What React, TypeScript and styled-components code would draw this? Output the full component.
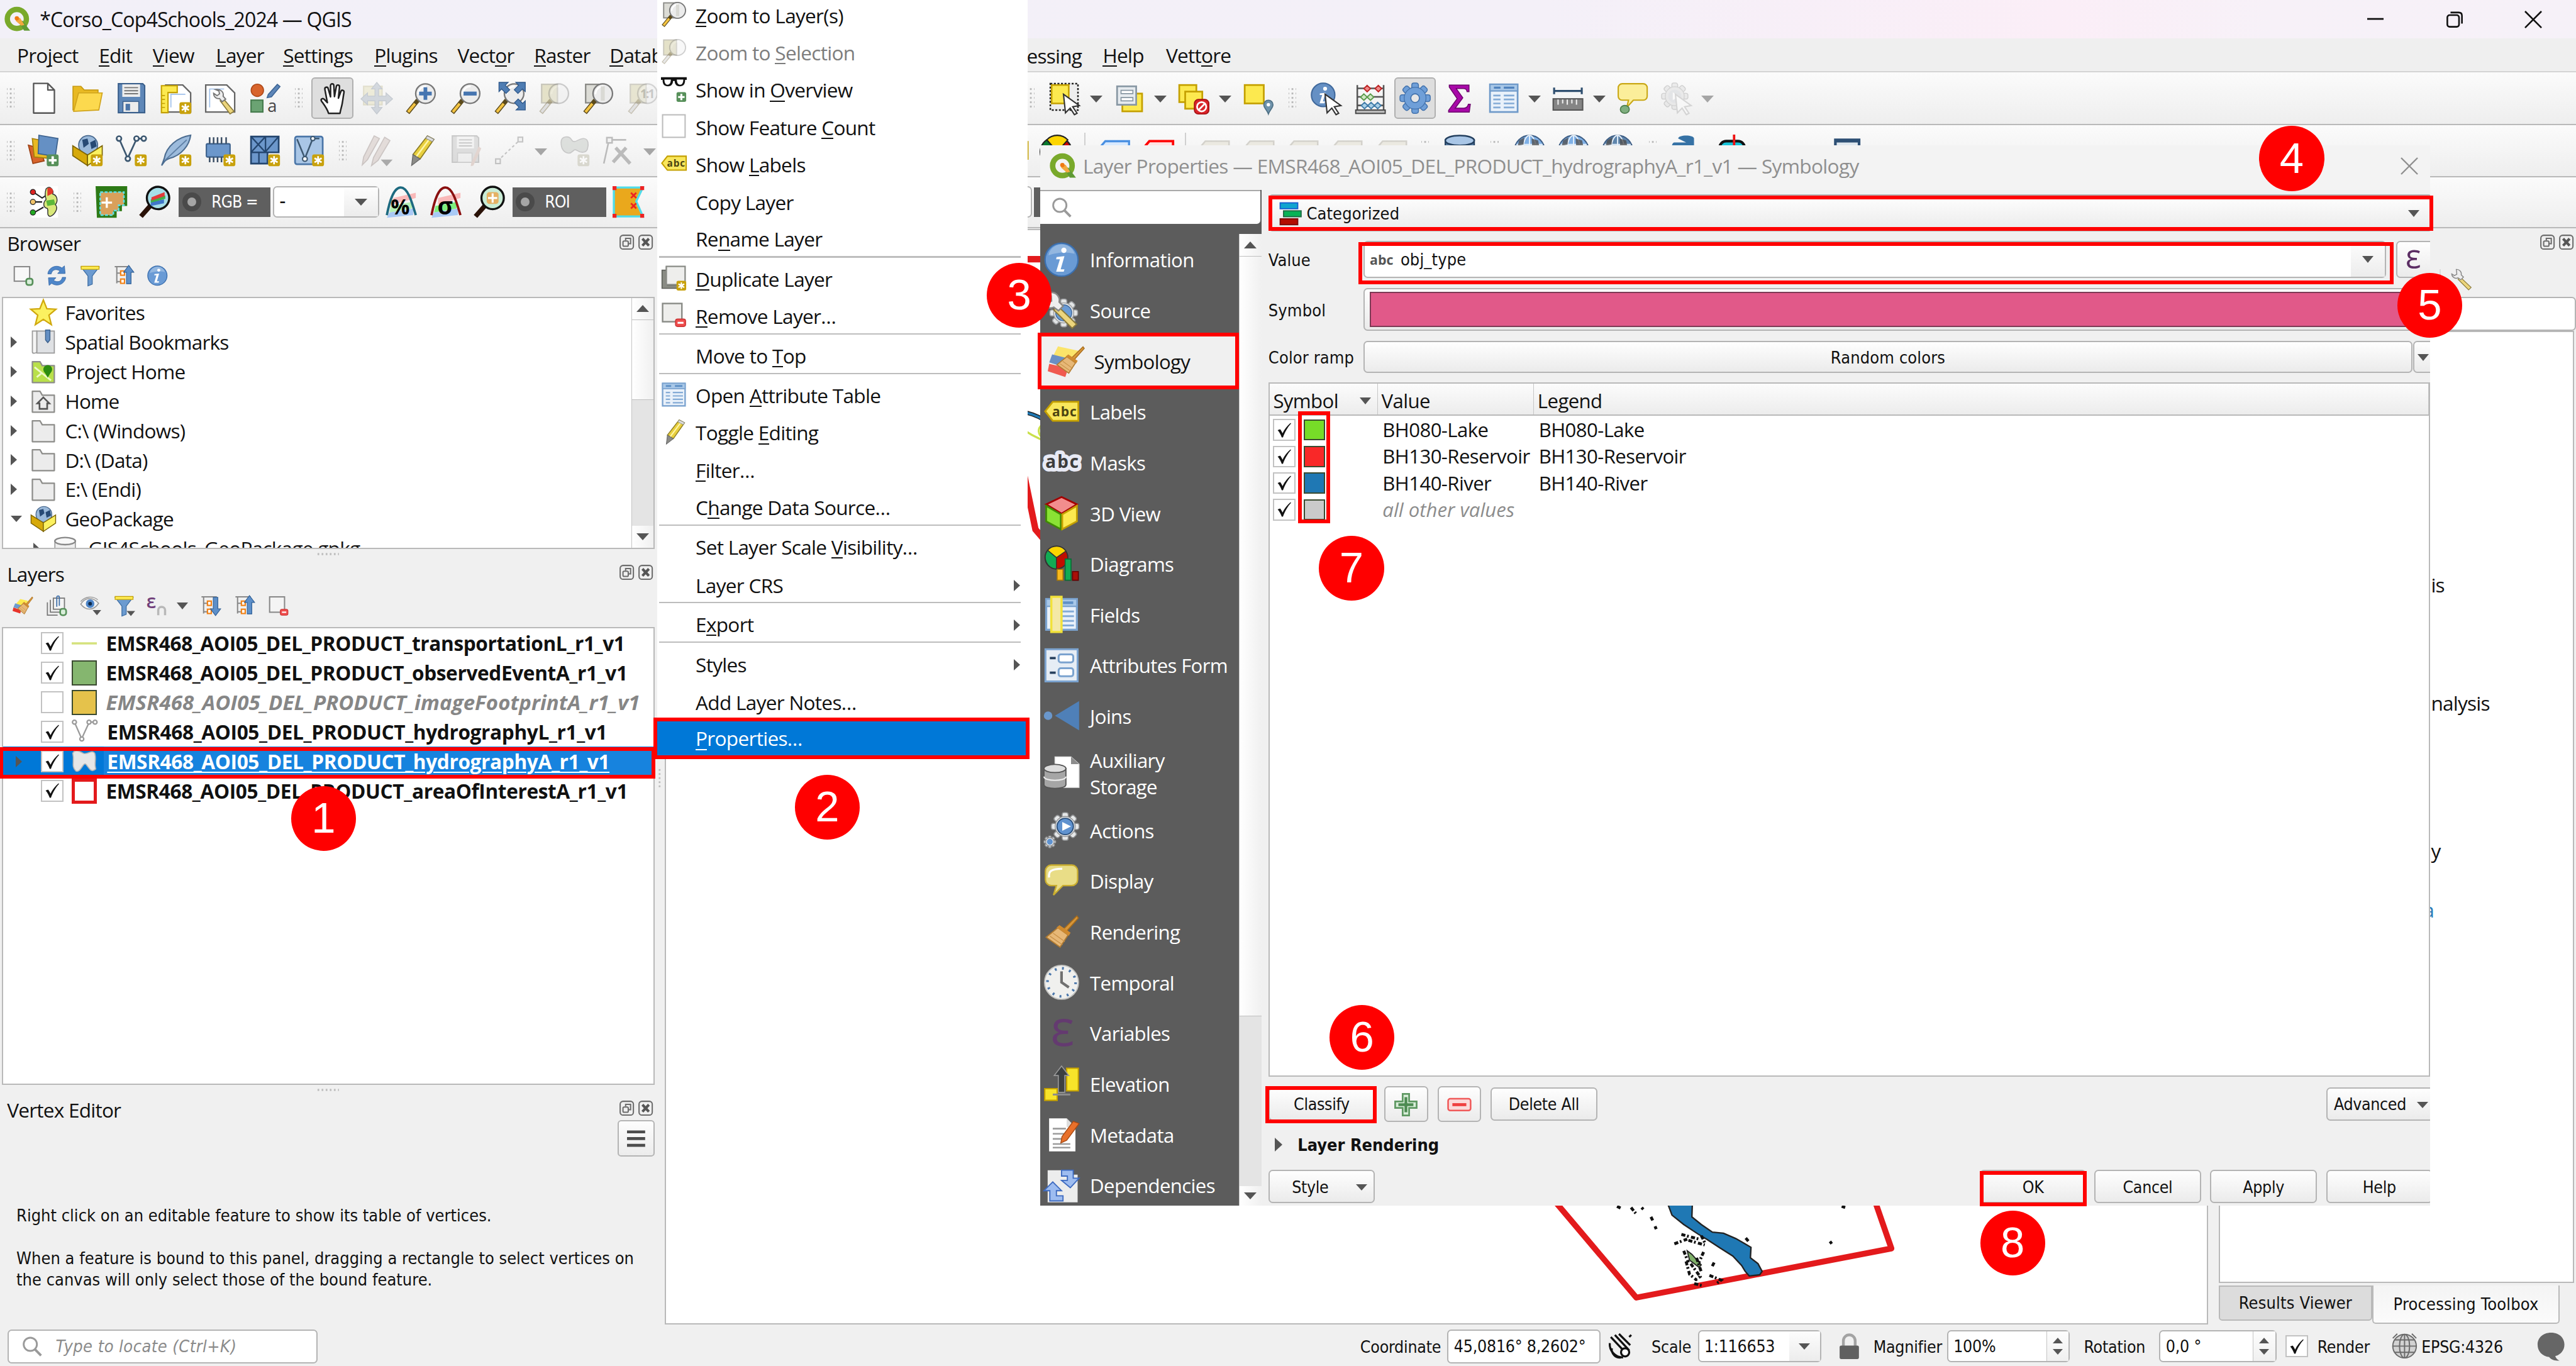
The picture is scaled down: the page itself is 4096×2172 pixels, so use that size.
import React from "react";
import styled, { createGlobalStyle, css } from "styled-components";

const UI = `"Open Sans", "Noto Sans", sans-serif`;
const TAHOMA = `"DejaVu Sans Condensed", "DejaVu Sans", sans-serif`;

const Global = createGlobalStyle`
  html, body { margin: 0; padding: 0; height: 100%; overflow: hidden; background: #f0f0f0; }
  * { box-sizing: border-box; }
  svg { display: block; flex: none; overflow: visible; }
  svg text { font-family: ${UI}; }
`;

/* ------------------------------------------------------------------ icons */

const Star = ({ gray }: { gray?: boolean }) => (
  <g>
    <rect x="14.5" y="15" width="9" height="9" rx="1.6" fill={gray ? "#c9c7b8" : "#c8a10c"} />
    <path d="M19 16.4v6.2M16.3 17.9l5.4 3.2M16.3 21.1l5.4-3.2" stroke="#fff" strokeWidth="1.3" />
  </g>
);
const PlusBadge = () => (
  <g>
    <rect x="14.5" y="15" width="9" height="9" rx="1.6" fill="#57905a" />
    <path d="M19 16.5v6M16 19.5h6" stroke="#fff" strokeWidth="1.8" />
  </g>
);
const Lens = ({ children, dim }: { children?: React.ReactNode; dim?: boolean }) => (
  <g opacity={dim ? 0.35 : 1}>
    <path d="M9.8 13.5L2 23" stroke="#5b4a1c" strokeWidth="3.4" />
    <path d="M7.6 16.2L2.4 22.5" stroke={dim ? "#bbb" : "#f4c442"} strokeWidth="2" />
    <circle cx="15.5" cy="8.5" r="7.4" fill="#ececec" stroke="#777" strokeWidth="1.1" />
    <path d="M10 9a6 6 0 0 1 6-6" stroke="#fff" strokeWidth="1.2" fill="none" />
    {children}
  </g>
);
const Pencil = ({ c = "#e8cf3e", d = "#8a7a22" }: { c?: string; d?: string }) => (
  <g>
    <path d="M17 1l5 2.6L11.5 18.5 6 15.2z" fill={c} stroke={d} strokeWidth=".8" />
    <path d="M19.3 2.4L8.5 16.8" stroke="#fff6a8" strokeWidth="1.2" />
    <path d="M6 15.2l5.5 3.3L5 23.5z" fill="#8b8b87" stroke="#666" strokeWidth=".6" />
    <path d="M17 1l5 2.6-1.3 1.8-5-2.6z" fill="#ddd" stroke="#888" strokeWidth=".5" />
  </g>
);
const Brush = () => (
  <g>
    <path d="M22.5 1.5l1 1.4-8.6 9.6-2-1.6z" fill="#d7963a" stroke="#a86c1a" strokeWidth=".7" />
    <path d="M9.5 9.5l7 5-5.5 8.3L1.5 16z" fill="#e7b877" stroke="#b07a30" strokeWidth=".8" />
    <path d="M4 15.2l8.6 6M6.2 13.2l8 5.8" stroke="#c9924b" strokeWidth=".6" />
    <path d="M8.6 9.3l8.4 5.6 1.2-2-7.6-5.2z" fill="#cf8a2f" />
  </g>
);
const Abc = ({ fill, stroke }: { fill: string; stroke: string }) => (
  <g>
    <path d="M6 5.5h17.5v13H6L.8 12z" fill={fill} stroke={stroke} strokeWidth="1.2" />
    <text x="5.6" y="15.4" fontSize="9" fontWeight="700" fill="#4b4410" textLength="16">abc</text>
  </g>
);
const Gear = ({ cx, cy, r, fill, stroke }: { cx: number; cy: number; r: number; fill: string; stroke: string }) => (
  <g transform={`translate(${cx} ${cy})`}>
    {[0, 45, 90, 135].map((a) => (
      <rect key={a} x={-r * 0.22} y={-r} width={r * 0.44} height={r * 2} rx={r * 0.14} transform={`rotate(${a})`} fill={fill} stroke={stroke} strokeWidth=".7" />
    ))}
    <circle r={r * 0.72} fill={fill} stroke={stroke} strokeWidth=".6" />
  </g>
);
const Tree = ({ up }: { up?: boolean }) => (
  <g>
    <path d="M1 1.5h18M3.5 2v19M4 9h4M4 19h4" stroke="#888" strokeWidth="1.5" fill="none" />
    <rect x="8" y="6.5" width="4.5" height="5" fill="#fff" stroke="#f08218" strokeWidth="1.6" />
    <rect x="8" y="16" width="4.5" height="5" fill="#fff" stroke="#f08218" strokeWidth="1.6" />
    <path
      d={up ? "M17.5 0l6 8h-3.3v13.5h-5.4V8h-3.3z" : "M17.5 23.5l6-8h-3.3V2h-5.4v13.5h-3.3z"}
      fill="#5d8fc9" stroke="#2c5c94" strokeWidth=".8"
    />
  </g>
);
const Globe = ({ dark }: { dark?: boolean }) => (
  <g>
    <circle cx="12" cy="12" r="11.4" fill={dark ? "#5f86ad" : "#7fb0e6"} stroke="#3f5f86" strokeWidth="1" />
    <ellipse cx="12" cy="12" rx="5" ry="11.4" fill="none" stroke="#e9f2fb" strokeWidth=".9" />
    <path d="M2 7.5h20M.8 12h22.4M2.5 17h19M12 .6v22.8" stroke="#e9f2fb" strokeWidth=".9" />
    <path d="M4 4.5l4-2.5-.6 5.5-4.4 1zM13.5 3l5 1.4 1 5.4-5.5-.6z" fill="#4c4a48" opacity=".75" />
  </g>
);
const Package = () => (
  <g>
    <circle cx="12.5" cy="8" r="7.2" fill="#9ab9da" stroke="#4a6a8f" strokeWidth=".8" />
    <path d="M8 4l4-1 1 4-4 3zM14 6l4-2 1 5-4 2z" fill="#274a75" />
    <path d="M.8 8.5l11.2 7v8L.8 16z" fill="#d6a90a" stroke="#7d6405" strokeWidth=".8" />
    <path d="M23.2 8.5L12 15.5v8L23.2 16z" fill="#fbf160" stroke="#7d6405" strokeWidth=".8" />
  </g>
);
const VLine = ({ c = "#3d5871" }: { c?: string }) => (
  <g fill="#fff" stroke={c} strokeWidth="1.3">
    <path d="M2.5 3l6.600 15L16 3h5" fill="none" />
    <circle cx="2.5" cy="3" r="1.8" /><circle cx="9.2" cy="18.3" r="1.8" /><circle cx="15.8" cy="3" r="1.8" /><circle cx="21.3" cy="3" r="1.8" />
  </g>
);
const Folder = ({ children, fill = "#ececec" }: { children?: React.ReactNode; fill?: string }) => (
  <g>
    <path d="M2 3h7l2 3.5h11V22H2z" fill={fill} stroke="#8d8d8a" strokeWidth="1.3" strokeLinejoin="round" />
    {children}
  </g>
);
const Cursor = ({ dim }: { dim?: boolean }) => (
  <path d="M11 9l12 8.600-5 .9 3.300 5-2 1-3.200-5-3.600 3.600z" fill="#fff" stroke={dim ? "#aaa" : "#333"} strokeWidth="1" />
);
const Funnel = () => (
  <g>
    <path d="M1.5 2h21l-8 10.500V22l-5 2V12.500z" fill="#6c9bd0" stroke="#3f6fa5" strokeWidth="1" />
    <path d="M1.5 1h21v3.600h-21z" fill="#fce94f" stroke="#c4a000" strokeWidth=".9" />
  </g>
);
const Sheet = ({ dim }: { dim?: boolean }) => (
  <rect x="2.5" y="1.5" width="12" height="14" fill={dim ? "#e4e1c8" : "#dcdcd6"} stroke={dim ? "#c8c6bb" : "#8a8a86"} strokeWidth="1.1" />
);
const Info = () => (
  <g>
    <circle cx="12" cy="12" r="11.300" fill="#6a9bd5" stroke="#3b6fae" strokeWidth="1" />
    <path d="M3 9a9.300 9.300 0 0 1 18-1c-6-1.600-12-1-18 1z" fill="#fff" opacity=".28" />
    <circle cx="13.600" cy="5.600" r="1.800" fill="#fff" />
    <path d="M8.600 10.200l5.400-.6-2.600 9h2.600l-.5 1.600H8.300l2.600-8.500H8.300z" fill="#fff" />
  </g>
);
const SheetTable = () => (
  <g>
    <rect x="1.5" y="1.5" width="21" height="21" fill="#e9f1fa" stroke="#7ba3cf" strokeWidth="1.4" />
    <rect x="1.5" y="1.5" width="21" height="5" fill="#a9c8e8" stroke="#7ba3cf" strokeWidth="1" />
    <path d="M4.5 4h5M13 4h7" stroke="#5f90c6" strokeWidth="1.8" />
    <path d="M4.5 10h4M11 10h9.500M4.500 13.200h4M11 13.200h9.500M4.500 16.400h4M11 16.400h9.500M4.500 19.600h4M11 19.600h9.500" stroke="#84abd6" strokeWidth="1.3" />
  </g>
);
const Wrench = () => (
  <g>
    <path d="M10.5 9.5l12 11.500-2.800 2.600L8 12z" fill="#ecd57c" stroke="#8a7a3c" strokeWidth=".8" />
    <path d="M6 1a5 5 0 0 1 5.500 6l2.500 2.500-3 3L8 10.300A5 5 0 0 1 1 6l3 1.800 2.600-1.500L6.400 3.400z" fill="#eee" stroke="#888" strokeWidth="1" />
  </g>
);
const Cube = () => (
  <g>
    <path d="M12 1l10.500 5L12 12.300 1.500 6z" fill="#f28d8d" stroke="#a40000" strokeWidth="1.2" />
    <path d="M1.5 7v10.600L11.500 23V12.800z" fill="#8ae234" stroke="#3f8a05" strokeWidth="1.2" />
    <path d="M22.5 7v10.600L12.500 23V12.800z" fill="#fce94f" stroke="#c4a000" strokeWidth="1.2" />
  </g>
);

const icons: Record<string, React.ReactNode> = {
  qgis: (
    <g>
      <circle cx="11.6" cy="11.8" r="8.9" fill="none" stroke="#79a92b" strokeWidth="5" />
      <path d="M12.5 13.500h4.500l7 9.200h-5.600z" fill="#5f9a34" />
      <path d="M10.3 9.800l4.400 1.200 4 6.400-3 .6-5-4.200z" fill="#f3a93e" />
      <circle cx="11.6" cy="11.2" r="2" fill="#ee7913" />
    </g>
  ),
  newdoc: <path d="M4.5 .8h10.800l5 5v17.500H4.500zM15.300 .8v5h5" fill="#fff" stroke="#555" strokeWidth="1.1" strokeLinejoin="round" />,
  open: (
    <g>
      <path d="M1 21V3h6l2.500 2.800H20V21z" fill="#e8b923" stroke="#c79a12" strokeWidth=".8" />
      <path d="M1.5 22L5.200 8h18l-2.600 13z" fill="#fcd94e" stroke="#d0a41c" strokeWidth=".8" />
    </g>
  ),
  save: (
    <g>
      <path d="M2 1h18.500l1.500 1.500V23H2z" fill="#5e87b8" stroke="#3b608c" strokeWidth="1" />
      <rect x="5" y="1.5" width="13.5" height="9.5" fill="#eee" />
      <path d="M6.5 4h10.500M6.500 6.300h10.500M6.500 8.600h10.500" stroke="#777" strokeWidth=".9" />
      <rect x="5.5" y="14.5" width="12" height="8.3" fill="#ececec" stroke="#3b608c" strokeWidth=".7" />
      <rect x="7.5" y="16.3" width="3.4" height="5" fill="#4c75a8" />
    </g>
  ),
  savedim: (
    <g opacity=".4">
      <path d="M2 1h18.500l1.500 1.500V21H2z" fill="#bbb" stroke="#888" strokeWidth="1" />
      <rect x="5.5" y="1.5" width="13" height="9" fill="#eee" />
      <path d="M7 4h10M7 6.300h10M7 8.600h10" stroke="#888" strokeWidth=".9" />
      <rect x="6" y="14" width="11" height="7" fill="#e8e8e8" stroke="#999" strokeWidth=".7" />
      <path d="M22 9l2 1.500-6 13-2 .5.4-2.500z" fill="#c9a79b" />
    </g>
  ),
  layout: (
    <g>
      <path d="M4 2h13l6 6v14.500H4z" fill="#fff" stroke="#666" strokeWidth="1.1" />
      <path d="M8 19V9h11" fill="none" stroke="#9fc0ea" strokeWidth=".8" />
      <path d="M.8 2.500h12v5.200h-7V23h-5z" fill="#fce94f" stroke="#c4a000" strokeWidth="1" />
      <path d="M1 10h2.500M1 13h2.500M1 16h2.500M1 19h2.500" stroke="#c4a000" strokeWidth=".8" />
      <Star />
    </g>
  ),
  layoutmgr: (
    <g>
      <path d="M1 2h16l6 6v14.500H1z" fill="#fff" stroke="#666" strokeWidth="1.1" />
      <path d="M4 19V5h11" fill="none" stroke="#9fc0ea" strokeWidth=".8" />
      <path d="M14.5 12.500l8 9.500-3 2L12 14z" fill="#ecd57c" stroke="#8a7a3c" strokeWidth=".8" />
      <path d="M8.5 5.500c4-.6 6.500 2 5.700 5l2 2.200-2.700 2-2-2.400c-2.500.4-4.500-1.300-4.500-4l2.600 1.800 1.900-1.400-.5-2.200z" fill="#eee" stroke="#777" strokeWidth=".9" />
    </g>
  ),
  style: (
    <g>
      <circle cx="6.3" cy="6" r="4.7" fill="#d8642c" stroke="#b04a1a" strokeWidth=".8" />
      <path d="M21.5 1.500l2 1.700L17 11l-3.200.6.800-2.400z" fill="#5d86b8" stroke="#3d6595" strokeWidth=".8" />
      <rect x="1.5" y="13.5" width="9" height="9" fill="#6ba373" stroke="#447a4c" strokeWidth="1" />
      <text x="14" y="22.5" fontSize="13" fill="#444">a</text>
    </g>
  ),
  hand: (
    <path
      d="M8.8 23.500c-1-3.500-3-6-5.300-9.200-1-1.500.8-2.700 2-1.500l2.400 2.600L6 5.300c-.3-1.800 2-2.300 2.500-.6L10.300 11V2.500c0-1.900 2.400-1.900 2.500 0l.5 8.300 1.400-7.700c.4-1.700 2.600-1.300 2.400.5L16.300 12l1.900-5.200c.6-1.600 2.600-.8 2.300.8-.6 3.400-.9 6.500-1.500 9.400-.4 2-1.200 4-1.500 6.500z"
      fill="#fff" stroke="#222" strokeWidth="1.2" strokeLinejoin="round"
    />
  ),
  pansel: (
    <g opacity=".45">
      <rect x="2" y="3" width="14" height="14" fill="#e4dfb8" stroke="#c8c29a" />
      <path d="M12 0l4 5h-2.600v5.400H19V8l5 4.500-5 4.500v-3h-5.600v5H16l-4 5-4-5h2.600v-5H5v3L0 12.500 5 8v2.400h5.600V5H8z" fill="#a9b4c2" stroke="#8c98a6" strokeWidth=".6" />
    </g>
  ),
  zoomin: <Lens><path d="M15.5 3.700v9.600M10.700 8.500h9.600" stroke="#4675b0" strokeWidth="2.8" /></Lens>,
  zoomout: <Lens><path d="M10.5 8.500h10" stroke="#4675b0" strokeWidth="3" /></Lens>,
  zoomfull: (
    <Lens>
      <path d="M4 0h7L8.800 2.200l3.400 3.400-2.800 2.800L6 5 4 7zM24 0v7l-2.200-2-3.400 3.400-2.800-2.800L19 2.200 16.800 0zM24 21h-7l2.200-2.200-3.400-3.400 2.800-2.800L22 16l2-2z" fill="#4f7db3" stroke="#2e5789" strokeWidth=".6" />
    </Lens>
  ),
  zoomsel: <g><Sheet dim /><Lens dim /></g>,
  zoomlayer: <g><Sheet /><Lens><path d="M14 3h3v11h-3z" fill="#d9d9d4" /></Lens></g>,
  zoomnative: <g opacity=".8"><Sheet dim /><Lens dim><text x="10" y="12" fontSize="9" fontWeight="700" fill="#555">1:1</text></Lens></g>,
  selrect: (
    <g>
      <rect x="1" y="1" width="21" height="20" fill="#eee" stroke="#222" strokeWidth="1.2" strokeDasharray="1.5 1.2" />
      <rect x="2" y="2" width="13" height="14" fill="#fce94f" stroke="#c4a000" strokeWidth="1.2" />
      <Cursor />
    </g>
  ),
  selform: (
    <g>
      <rect x="6.5" y="8.5" width="15" height="13.5" fill="#fce94f" stroke="#c4a000" strokeWidth="1.3" />
      <rect x="2.5" y="3" width="14.5" height="14" fill="#e6ebef" stroke="#8897a3" strokeWidth="1.3" />
      <path d="M5.5 6h9v2.500h-9zM5.500 11.500h9V14h-9z" fill="#fff" stroke="#8897a3" strokeWidth=".8" />
    </g>
  ),
  desel: (
    <g>
      <rect x="1" y="2" width="13" height="13" fill="#fce94f" stroke="#c4a000" strokeWidth="1.3" />
      <rect x="5.5" y="7" width="13" height="13" fill="#fce94f" stroke="#c4a000" strokeWidth="1.3" />
      <rect x="12.5" y="13" width="11" height="11" rx="3" fill="#d9252a" stroke="#a50f12" strokeWidth=".8" />
      <circle cx="18" cy="18.5" r="3.5" fill="none" stroke="#fff" strokeWidth="1.3" />
      <path d="M15.6 21l5-5" stroke="#fff" strokeWidth="1.3" />
    </g>
  ),
  selloc: (
    <g>
      <rect x="1.5" y="2" width="14.5" height="14" fill="#fce94f" stroke="#c4a000" strokeWidth="1.3" />
      <path d="M19.5 24c-1-3-3.500-4.500-3.500-7a3.500 3.500 0 0 1 7 0c0 2.500-2.500 4-3.500 7z" fill="#6f93ab" stroke="#4e7085" strokeWidth=".8" />
      <circle cx="19.5" cy="17" r="1.3" fill="#fff" />
    </g>
  ),
  identify: (
    <g>
      <circle cx="9.5" cy="9.5" r="8.9" fill="#6590c4" stroke="#40699c" strokeWidth="1" />
      <circle cx="11" cy="4.8" r="1.5" fill="#fff" />
      <path d="M7 8.400l4.300-.5-2 6.500h1.600l-.4 1.500H6.800l2-6.300H6.900z" fill="#fff" />
      <Cursor />
    </g>
  ),
  abacus: (
    <g>
      <path d="M2 2v19M22 2v19M2 4.500h20M2 11h20M2 17.500h20" stroke="#555" strokeWidth="1.2" fill="none" />
      <g strokeWidth=".9">
        <path d="M9.5 2.300l2.500 2.400-2.500 2.400L7 4.700zM18 2.300l2.500 2.400L18 7.100l-2.500-2.400z" fill="#e88" stroke="#b22" />
        <path d="M7 8.800l2.500 2.400L7 13.600l-2.500-2.400zM12 8.800l2.500 2.400-2.500 2.400-2.500-2.400z" fill="#cfe8c4" stroke="#5a9a4a" />
        <path d="M7.5 15.200l2.500 2.400L7.500 20 5 17.600zM12.500 15.200l2.500 2.400-2.500 2.400-2.500-2.400zM17.500 15.200l2.500 2.400-2.500 2.400-2.500-2.400z" fill="#a9d0e8" stroke="#3f7ba8" />
      </g>
      <rect x=".8" y="21" width="22.4" height="2.6" fill="#bbb" stroke="#444" strokeWidth=".9" />
    </g>
  ),
  gear: <g><Gear cx={12} cy={12} r={11.5} fill="#6f9fd8" stroke="#4272ad" /><circle cx="12" cy="12" r="3.3" fill="#e6e6e6" stroke="#4272ad" strokeWidth=".8" /></g>,
  sigma: <path d="M4.5 2h15v5h-1.500c-.3-1.700-1-2.300-3-2.300H9.800l5 7L9 19.600h6.500c2 0 3-1 3.500-3h1.500l-.8 6H4v-1.400l6.500-8.800-6-8.800z" fill="#a808a8" stroke="#6d066d" strokeWidth=".7" />,
  table: (
    <g>
      <rect x="1.5" y="1.5" width="21" height="21" fill="#e9f1fa" stroke="#6f9ac9" strokeWidth="1.3" />
      <rect x="1.5" y="1.5" width="21" height="5" fill="#a9c8e8" stroke="#6f9ac9" strokeWidth="1" />
      <path d="M4.5 4h5M12 4h8" stroke="#4f82bd" strokeWidth="1.6" />
      <path d="M4 10h5.500M12 10h8M4 13h5.500M12 13h8M4 16h5.500M12 16h8M4 19h5.500M12 19h8" stroke="#84abd6" strokeWidth="1.3" />
    </g>
  ),
  ruler: (
    <g>
      <path d="M1.5 6.500h21M1.500 4v5M22.500 4v5" stroke="#2f4f6f" strokeWidth="1.5" />
      <rect x=".8" y="12.5" width="22.4" height="8.5" fill="#858585" stroke="#555" strokeWidth="1" />
      <path d="M4.5 13v4M8 13v3M11.500 13v4M15 13v3M18.500 13v4" stroke="#eee" strokeWidth="1" />
    </g>
  ),
  tip: (
    <g>
      <path d="M4 1h16a3 3 0 0 1 3 3v6.500a3 3 0 0 1-3 3h-7.500L7.500 19l1.300-5.500H4a3 3 0 0 1-3-3V4a3 3 0 0 1 3-3z" fill="#fbee9a" stroke="#c9a715" strokeWidth="1" />
      <ellipse cx="6" cy="20.5" rx="3.4" ry="3" fill="#7fae7f" stroke="#4d7d4d" strokeWidth=".8" />
    </g>
  ),
  actiondim: <g opacity=".4"><Gear cx={10.5} cy={10.5} r={10} fill="#d9d9d9" stroke="#9c9c9c" /><circle cx="10.5" cy="10.5" r="5" fill="#c9ccd2" /><path d="M9 7.500l5 3-5 3z" fill="#fff" /><Cursor dim /></g>,
  dsm: (
    <g>
      <path d="M.5 8l9 2.500L12.500 20 4 22z" fill="#d8642c" stroke="#9c3f12" strokeWidth=".8" />
      <path d="M3.5 3l10 2 1.500 13-10-1z" fill="#e8b923" stroke="#a47e0c" strokeWidth=".8" />
      <path d="M8.5.5L23 3l-2 13.500-13-2z" fill="#6590c4" stroke="#3b608c" strokeWidth=".8" />
      <PlusBadge />
    </g>
  ),
  newgpkg: <g><Package /><Star /></g>,
  newshp: <g><VLine /><Star /></g>,
  feather: (
    <g>
      <path d="M23 .5C13 2 4.500 9 3 18L1 23.500c2-3 3-4.500 6-5.500C16 16 22 8 23 .5z" fill="#9cbbdc" stroke="#4b6c90" strokeWidth="1" />
      <path d="M20 4L3 20" stroke="#5d7fa5" strokeWidth=".9" />
      <Star />
    </g>
  ),
  memory: (
    <g>
      <rect x="1.5" y="7" width="18" height="10" rx="1" fill="#6c97cb" stroke="#3b608c" strokeWidth="1" />
      <path d="M4 2v5M7 2v5M10 2v5M13 2v5M16.500 2v5M4 17v4M7 17v4M10 17v4M13 17v4" stroke="#3c4f66" strokeWidth="1.2" />
      <Star />
    </g>
  ),
  mesh: (
    <g>
      <path d="M1.5 1.500h21v12H14V22H1.500z" fill="#6c97cb" stroke="#24466f" strokeWidth="1.3" />
      <path d="M1.5 13.500h13M12.500 1.500v12M1.500 1.500l11 12M12.500 1.500l-11 12M7.500 13.500V22M22 2l-9.500 11" stroke="#24466f" strokeWidth="1.1" fill="none" />
      <Star />
    </g>
  ),
  virtual: (
    <g>
      <rect x="1.5" y="1.5" width="21" height="21" rx="1.5" fill="#a9c6e6" stroke="#4b76a8" strokeWidth="1.3" />
      <path d="M3 3.500l6 14.500 6-15h5" fill="none" stroke="#3d5871" strokeWidth="1.2" />
      <circle cx="9" cy="18.5" r="1.8" fill="#fff" stroke="#3d5871" />
      <circle cx="15" cy="3" r="1.6" fill="#fff" stroke="#3d5871" />
      <Star />
    </g>
  ),
  pencilsdim: (
    <g opacity=".45">
      <path d="M10 1l4 2-9 16-4 4 1-6z" fill="#cdbdb8" stroke="#9b8c88" strokeWidth=".8" />
      <path d="M18 2l4 2.500-9 15-5 4 1.500-6z" fill="#cdbdb8" stroke="#9b8c88" strokeWidth=".8" />
      <path d="M15 19h9l-4.500 5z" fill="#555" />
    </g>
  ),
  pencil: <Pencil />,
  segdim: <g opacity=".45" fill="#eee" stroke="#888" strokeWidth="1"><path d="M3 20L20 4" strokeDasharray="2 1.8" /><rect x="1.5" y="18.5" width="3.5" height="3.5" /><rect x="18.5" y="2" width="3.5" height="3.5" /></g>,
  polydim: <g opacity=".6"><path d="M2 6c0-5 6-5.500 8-2s5-1 9-1 4 5 3 8-5 3-8 1-3 3-7 2S2 10 2 6z" fill="#ccd0cc" stroke="#aaa" strokeWidth=".8" /><Star gray /></g>,
  vertdim: <g opacity=".45" stroke="#777" fill="none" strokeWidth="1.2"><path d="M1 22L5 4h13" /><rect x="3.3" y="2.3" width="4" height="4" fill="#eee" /><path d="M8 21L18 10M10 10l11 12" strokeWidth="2.6" /></g>,
  scp: (
    <g>
      <rect x="3" y="0" width="20" height="24" fill="#fff" />
      <path d="M5 5l6 4 6-4M5 12h6M5 20l7-4" stroke="#222" strokeWidth="1" fill="none" />
      <circle cx="4" cy="4.5" r="2" fill="#d22" stroke="#222" strokeWidth=".6" /><circle cx="4" cy="12" r="2" fill="#f2c46a" stroke="#222" strokeWidth=".6" /><circle cx="4" cy="20" r="2" fill="#2a2" stroke="#222" strokeWidth=".6" />
      <path d="M14 2c3-3 6 1 5 4 4 1 4 6 2 8 3 3-1 8-4 9-3-1-1-4-2-6-4-1-3-5-1-7-1-3-1-5 0-8z" fill="#d9e87a" stroke="#333" strokeWidth=".7" />
      <path d="M15 1.500c3-1 5 1 4 4l-4 2z" fill="#e2382a" /><path d="M14 11l6-1 1 4-6 1z" fill="#5cb83a" />
    </g>
  ),
  roiband: (
    <g>
      <path d="M0 0h24v15h-4v4h-4v5H1z" fill="#2d7a16" />
      <path d="M3.5 4.500h18v10h-4v4h-4V22h-10z" fill="#d9a05b" stroke="#5fe0e8" strokeWidth="1.2" strokeDasharray="2.2 1.2" />
      <path d="M8.5 8.500v8M4.500 12.500h8" stroke="#fff" strokeWidth="1.6" />
    </g>
  ),
  bandlens: (
    <g>
      <path d="M8 15L1 23" stroke="#2a1208" strokeWidth="3.6" />
      <circle cx="14" cy="9" r="8.5" fill="#a6dfe8" stroke="#111" strokeWidth="1.6" />
      <path d="M8.5 12l10-2v3l-10 2z" fill="#3f76c9" /><path d="M8.5 10l11-3v2.600l-11 3z" fill="#3fb04a" /><path d="M9 8.500l10-4v3l-10 3.500z" fill="#e23a3a" />
    </g>
  ),
  pct: (
    <g>
      <path d="M3 20l18-3v5L1 24z" fill="#a9c9f5" /><path d="M4 15l16-3v5L3 20z" fill="#b5f0b5" /><path d="M6 9l17-4v4L6 14z" fill="#f9b9b9" />
      <path d="M1 22C3 12 6 1 11.500 1S20 12 23 22" stroke="#1d6a80" strokeWidth="1.8" fill="none" />
      <text x="4" y="21.5" fontSize="16" fontWeight="700" fill="#000">%</text>
    </g>
  ),
  sig: (
    <g>
      <path d="M3 20l18-3v5L1 24z" fill="#a9c9f5" /><path d="M4 15l16-3v5L3 20z" fill="#7ff07f" /><path d="M6 9l17-4v4L6 14z" fill="#f9b9b9" />
      <path d="M1 22C3 12 6 1 11.500 1S20 12 23 22" stroke="#8a1010" strokeWidth="1.8" fill="none" />
      <text x="5.5" y="21.5" fontSize="18" fontWeight="700" fill="#000">σ</text>
    </g>
  ),
  scpzoom: (
    <g>
      <path d="M8 15L1 23" stroke="#2a1208" strokeWidth="3.6" />
      <circle cx="14" cy="9" r="8.5" fill="#c9ecd6" stroke="#111" strokeWidth="1.6" />
      <rect x="9.5" y="4.5" width="9" height="9" rx="2" fill="#e5b165" /><path d="M14 5.500v7M10.500 9h7" stroke="#fff" strokeWidth="1.5" />
    </g>
  ),
  roipoly: (
    <g>
      <path d="M1 1h22l-5 10.500L23 23H1z" fill="#eaa81c" stroke="#4fdcea" strokeWidth="1.6" />
      <path d="M0 0h3v3H0zM21 0h3v3h-3zM0 21h3v3H0zM21 21h3v3h-3z" fill="#e22" />
      <path d="M14 5l4 4M18 5l-4 4M14 13l4 4M18 13l-4 4" stroke="#e22" strokeWidth="1.3" />
    </g>
  ),
  pie: <g><circle cx="12" cy="13" r="11" fill="#c00" stroke="#222" strokeWidth="1.2" /><path d="M12 13L4 4a11 11 0 0 1 16 0z" fill="#fcd500" stroke="#222" /><path d="M12 13L4 4a11 11 0 0 0 8 20z" fill="#0a7a2f" stroke="#222" /></g>,
  lblue: <g><path d="M6 5h18v14H6L0 12z" fill="#d9eaff" stroke="#4a90e2" strokeWidth="1.6" /><text x="5.5" y="17.5" fontSize="11" fontWeight="700" fill="#333">abc</text></g>,
  lred: <g><path d="M6 5h18v14H6L0 12z" fill="#ffe3e3" stroke="#f00" strokeWidth="1.8" /><text x="5.5" y="17.5" fontSize="11" fontWeight="700" fill="#c33">abc</text></g>,
  lgray: <g opacity=".6"><path d="M6 5h18v14H6L0 12z" fill="#e4e1d4" stroke="#bdbab0" strokeWidth="1.2" /><text x="5.5" y="17.5" fontSize="11" fontWeight="700" fill="#999">abc</text></g>,
  dbblue: <g><path d="M1 4v16c0 5 22 5 22 0V4z" fill="#54789f" stroke="#24405f" /><ellipse cx="12" cy="4.5" rx="11" ry="3.8" fill="#a9c6e6" stroke="#24405f" strokeWidth="1.2" /></g>,
  globe1: <Globe />,
  globe2: <Globe dark />,
  python: <g><path d="M5 3c0-3 12-3 12 0v7H8c-3 0-3 3-3 5H2c-3-3-2-9 0-9h9z" fill="#3672a5" /><path d="M18 10h3c3 3 2 9 0 9h-9v2h6c0 3-12 3-12 0v-5h9c3 0 3-3 3-6z" fill="#ffd43b" /></g>,
  cyan: <g><rect x="3" y="5" width="19" height="18" rx="5" fill="#17c3d8" stroke="#111" strokeWidth="2" /><path d="M14 0v12" stroke="#e11" strokeWidth="1.8" /></g>,
  plug: <g><rect x="3" y="3" width="20" height="18" fill="#2d4f74" /><rect x="5" y="6" width="16" height="4" fill="#dfe7ee" /></g>,
  glasses: (
    <g>
      <path d="M0 1h24v2.500h-1.500c0 4-1.500 6-5 6s-4.700-2.500-4.700-5h-1.600c0 2.500-1.200 5-4.700 5S1.500 7.500 1.500 3.500H0z" fill="#111" />
      <path d="M3.2 3.200h6c0 2.800-1 4.800-3 4.800S3.200 6.200 3.200 3.200zM14.800 3.200h6c0 3-1 4.800-3 4.800s-3-2-3-4.800z" fill="#fff" />
      <PlusBadge />
    </g>
  ),
  checkbox: <rect x="1.5" y="1.5" width="21" height="21" fill="#fff" stroke="#bcbcbc" strokeWidth="1.2" />,
  labels: <Abc fill="#f9e75c" stroke="#c4a000" />,
  dup: <g><path d="M1 5h4v-3h1v17h14v3H1z" fill="#8a8c84" stroke="#5f615b" strokeWidth="1" /><rect x="5" y="1.5" width="17.5" height="17" fill="#eeeeec" stroke="#888a85" strokeWidth="1.3" /><Star /></g>,
  rem: <g><rect x="1.5" y="1.5" width="18" height="17" fill="#eeeeec" stroke="#888a85" strokeWidth="1.4" /><rect x="13.5" y="16" width="9.5" height="7" rx="2" fill="#ef4c4c" stroke="#c93434" strokeWidth=".8" /><path d="M15.5 19.500h5.500" stroke="#fff" strokeWidth="1.8" /></g>,
  atable: <SheetTable />,
  addlayer: <g><rect x="2" y="1.5" width="18" height="17" fill="#f8f8f8" stroke="#888" strokeWidth="1.5" /><rect x="16" y="15.5" width="7.5" height="7.5" rx="2.5" fill="#d9eeda" stroke="#57905a" strokeWidth="2" /></g>,
  refresh: <g fill="#4e86c9" stroke="#2f63a3" strokeWidth=".6"><path d="M1.5 10C2 3 11-2 18 3l3-2.500.8 9H13l2.800-3C11 3.500 6.500 5 5.500 10z" /><path d="M22.5 14C22 21 13 26 6 21l-3 2.500-.8-9H11l-2.800 3C13 20.500 17.500 19 18.500 14z" /></g>,
  funnel: <Funnel />,
  funnelmenu: <g><Funnel /><path d="M15 18h10l-5 6z" fill="#555" /></g>,
  treeup: <Tree up />,
  treedown: <Tree />,
  info: <Info />,
  brush3: <g><path d="M9 4l9 2-4 8-12-2z" fill="#fce94f" /><path d="M3 9l9 3-2 4-9-2z" fill="#6c9bd0" /><path d="M1 14l9 3-1 4-9-3z" fill="#e8332a" /><g transform="translate(5 0) scale(.8 .95)"><Brush /></g></g>,
  groupadd: <g fill="#f4f4f4" stroke="#777" strokeWidth="1.3"><path d="M1 8v15h12" fill="none" /><path d="M4.5 5v14.500h12" fill="none" /><rect x="8" y="3" width="13" height="13" /><path d="M12 13V2c0-2 3-2 3 0v10" stroke="#3d6ea8" fill="none" /><rect x="16" y="15.5" width="7" height="7.5" rx="2.5" fill="#d9eeda" stroke="#57905a" strokeWidth="1.9" /></g>,
  eye: <g><path d="M1 10C6 2 15 1 22 9c-6 9-15 9-21 1z" fill="#f5f5f5" stroke="#999" strokeWidth="1.2" /><circle cx="12" cy="9.5" r="5" fill="#4e86c9" /><circle cx="12" cy="9.5" r="2.2" fill="#102a4a" /><path d="M1 7c5-6 14-7 20-2" stroke="#999" fill="none" strokeWidth="1" /><path d="M15 17h10l-5 6z" fill="#555" /></g>,
  epsfilter: <g><text x="-1" y="15" fontSize="22" fontWeight="600" fill="#71407a">ε</text><path d="M13 23v-6c0-5 8-5 8 0v6" stroke="#b8b8b8" strokeWidth="2.6" fill="none" /></g>,
  remlayer: <g><rect x="2" y="1.5" width="17.5" height="18" fill="#f4f4f4" stroke="#888" strokeWidth="1.5" /><rect x="14.5" y="16" width="9" height="7" rx="2" fill="#ef4c4c" stroke="#c93434" strokeWidth=".8" /><path d="M16.5 19.500h5" stroke="#fff" strokeWidth="1.6" /></g>,
  fav: <path d="M12 .5l3.200 8 8.300.5-6.400 5.400 2.200 8.600-7.300-4.700L4.700 23l2.200-8.600L.5 9l8.300-.5z" fill="#fbf160" stroke="#d0a80c" strokeWidth="1.3" />,
  bookmark: <g><path d="M6 2h16v20H6z" fill="#dfe1e4" stroke="#9a9a9a" strokeWidth="1" /><path d="M2 2h4v19c-1 1.500-4 1.500-4 0z" fill="#f5f5f5" stroke="#9a9a9a" strokeWidth="1" /><path d="M14 1h4v9l-2 2.500-2-2.500z" fill="#6590c4" stroke="#3b608c" strokeWidth=".8" /></g>,
  projhome: <Folder fill="#b9e04a"><path d="M4 8l15 12M6 17l5-4" stroke="#eef9c8" strokeWidth="1.6" /><circle cx="16" cy="10" r="4" fill="#2c8c10" /><path d="M12.5 11.500l3.500 6 3.500-6z" fill="#2c8c10" /></Folder>,
  home: <Folder><path d="M12 8.500l5.500 5.500h-2v5h-7v-5h-2z" fill="none" stroke="#555" strokeWidth="1.5" /></Folder>,
  folder: <Folder />,
  gpkg: <Package />,
  db: <g><path d="M2 4v19h20V4z" fill="#eee" stroke="#999" /><ellipse cx="12" cy="4.5" rx="10" ry="3.5" fill="#f8f8f8" stroke="#888" strokeWidth="1.5" /></g>,
  lineicon: <path d="M0 12h24" stroke="#d5e27c" strokeWidth="2.2" />,
  vline: <VLine c="#9a9a9a" />,
  poly: <path d="M1 4C3 0 7 2 11 4s8-4 11 0c2 6-1 9 1 15-4 4-6 0-9-4s-5 8-10 6C-1 16 3 12 1 4z" fill="#e6e6e6" stroke="#b5b5b5" strokeWidth="1" />,
  source: (
    <g>
      <Gear cx={13.5} cy={14} r={9.5} fill="#e3e5e6" stroke="#9a9c9e" />
      <circle cx="13.5" cy="14" r="5.5" fill="#6a9bd5" stroke="#40699c" strokeWidth=".6" />
      <g transform="translate(-2 -1) scale(1.08)"><Wrench /></g>
    </g>
  ),
  symbology: <g><path d="M7 2l14 3-5 9L3 10z" fill="#fbe46a" /><path d="M3 7.500l12 3-3 6L1 13z" fill="#6a8fc4" /><path d="M1 14l13 3-2 6L0 19z" fill="#f05a50" /><g transform="translate(5 1) scale(.85)"><Brush /></g></g>,
  masks: (
    <g>
      <text x="1" y="16" fontSize="12" fontWeight="700" fill="#e8eaf5" stroke="#e8eaf5" strokeWidth="5" strokeLinejoin="round" textLength="22">abc</text>
      <text x="1" y="16" fontSize="12" fontWeight="700" fill="#3c3c3c" textLength="22">abc</text>
    </g>
  ),
  cube: <Cube />,
  diagrams: (
    <g>
      <circle cx="8.5" cy="8" r="7.8" fill="#c00f00" stroke="#333" strokeWidth=".8" />
      <path d="M8.5 8L2.500 3A8 8 0 0 1 15 3.500z" fill="#fcd500" stroke="#333" strokeWidth=".6" />
      <path d="M8.5 8L2.500 3a8 8 0 0 0 6 12.800z" fill="#12ab54" stroke="#333" strokeWidth=".6" />
      <path d="M9 16h4v7.500H9z" fill="#f9b91c" stroke="#a87808" strokeWidth=".7" /><path d="M14.5 9h4v14.500h-4z" fill="#12ab54" stroke="#0a6b34" strokeWidth=".7" /><path d="M19.5 17.500h4v6h-4z" fill="#a80f08" stroke="#600" strokeWidth=".7" />
    </g>
  ),
  fields: <g><SheetTable /><rect x="5" y="0" width="7" height="24" fill="#f4e9a6" stroke="#f2e23a" strokeWidth="1.5" /></g>,
  form: <g><rect x="1" y="1" width="22" height="22" fill="#e6edf5" stroke="#7ba3cf" strokeWidth="1.3" /><path d="M4 7h4M4 17h4" stroke="#27405e" strokeWidth="1.6" /><rect x="10" y="4.5" width="10" height="5.5" rx="1.5" fill="#fff" stroke="#7ba3cf" strokeWidth="1.3" /><rect x="10" y="14" width="10" height="5.5" rx="1.5" fill="#fff" stroke="#7ba3cf" strokeWidth="1.3" /></g>,
  joins: <g><circle cx="2.8" cy="12" r="2.9" fill="#6a97cc" /><path d="M7.5 12L24 2v20z" fill="#4f80b8" /></g>,
  aux: (
    <g>
      <path d="M7.5 1h11L24 6v16H7.500z" fill="#fff" stroke="#ddd" strokeWidth=".6" /><path d="M18.5 1v5H24z" fill="#8c8c8c" />
      <path d="M0 9v11c0 3.500 15 3.500 15 0V9z" fill="#a6a6a6" stroke="#555" strokeWidth=".8" /><ellipse cx="7.5" cy="9" rx="7.5" ry="2.8" fill="#dcdcdc" stroke="#555" strokeWidth=".8" /><path d="M0 14.500c0 3.500 15 3.500 15 0" fill="none" stroke="#eee" strokeWidth=".9" />
    </g>
  ),
  actions: (
    <g>
      <Gear cx={14.5} cy={9.5} r={9.5} fill="#e6e8e9" stroke="#8f9193" />
      <circle cx="14.5" cy="9.5" r="5.6" fill="#5f92cf" stroke="#294d78" strokeWidth=".8" /><path d="M12.5 6.500l6 3-6 3z" fill="#fff" />
      <Gear cx={4} cy={20} r={4} fill="#e6e8e9" stroke="#8f9193" /><circle cx="4" cy="20" r="2" fill="#5f92cf" />
    </g>
  ),
  display: <g><path d="M5 1.500h14a4 4 0 0 1 4 4v6a4 4 0 0 1-4 4h-6L6.500 22l2-6.500H5a4 4 0 0 1-4-4v-6a4 4 0 0 1 4-4z" fill="#e9dd87" stroke="#c9ad2f" strokeWidth="1" /><path d="M3.5 10c-.5-4 1-6 9-6" stroke="#fff" strokeWidth="1.4" fill="none" /></g>,
  brush: <Brush />,
  clock: (
    <g>
      <circle cx="12" cy="12" r="11.6" fill="#f0f0ee" stroke="#c4c4c2" strokeWidth=".8" />
      <circle cx="12" cy="12" r="9.6" fill="none" stroke="#4b77ab" strokeWidth="1.8" strokeDasharray="1.3 3.73" />
      <path d="M12 4.500V12l5 3.500" stroke="#707070" strokeWidth="1.8" fill="none" />
    </g>
  ),
  eps: <text x="4.5" y="21" fontSize="34" fontWeight="400" fill="#643a70">ε</text>,
  elevation: <g><path d="M.5 15.500H9v8H.5z" fill="#f7e42a" stroke="#c4a000" strokeWidth=".9" /><path d="M15.5 1.500h8V17h-8z" fill="#f7e42a" stroke="#c4a000" strokeWidth=".9" /><path d="M6 19.500h12" stroke="#8c8c8c" strokeWidth="1.3" /><path d="M12 0l5 6.500h-2.800V18H9.800V6.500H7z" fill="#3c3f41" stroke="#999" strokeWidth=".7" /></g>,
  metadata: <g><path d="M3.5 1h12l6 6v16.500h-18z" fill="#fff" /><path d="M15.5 1v6h6z" fill="#ddd" /><path d="M6 8h9M6 11.500h8M6 15h7M6 18.500h12M6 21h12" stroke="#9b9b9b" strokeWidth="1.1" /><path d="M20 3l4 1.500-8.500 11.500-4 1.800.8-4.300z" fill="#e8702a" stroke="#a84a12" strokeWidth=".6" /></g>,
  deps: <g><path d="M2.5 2h13v3h7.500v19H2.500z" fill="#eceded" /><path d="M12 2h8v5.500h4L18 14l-6-5h4V6h-4z" fill="#9dbcf0" stroke="#3d6ac0" strokeWidth=".8" /><path d="M13 23H4v-7H0l6-6 6 6H8.500v3.500H13z" fill="#9dbcf0" stroke="#3d6ac0" strokeWidth=".8" /></g>,
  cats: <g strokeWidth="1.2"><rect x="1" y="1" width="18" height="6" fill="#10a5cf" stroke="#155fd0" /><rect x="4.5" y="9.2" width="18" height="6" fill="#08b356" stroke="#1f6a44" /><rect x="1" y="17.4" width="18" height="6" fill="#b40c00" stroke="#7a0c08" /></g>,
  plus: <g><path d="M9 2h6v7h7v6h-7v7H9v-7H2V9h7z" fill="#d9eeda" stroke="#5e9862" strokeWidth="1.6" /><path d="M12 5v14M5 12h14" stroke="#4d8b52" strokeWidth="2.6" /></g>,
  minus: <g><rect x="1.5" y="6.5" width="21" height="11" rx="2" fill="#fbdada" stroke="#f05a5a" strokeWidth="1.5" /><path d="M5.5 12h13" stroke="#ef3f3f" strokeWidth="2.8" /></g>,
  wrench: <Wrench />,
  satellite: <g stroke="#111" strokeWidth="2" fill="none"><path d="M2 3l15 16M6 1l14 15M10 0l11 11" /><path d="M3 14a8 8 0 0 0 9 9M1 9a13 13 0 0 0 13 14" /><circle cx="16" cy="18" r="4" fill="#fff" /><path d="M20 3l2-2" /></g>,
  lock: <g><path d="M6.5 12V7a5.500 5.500 0 0 1 11 0v5" fill="none" stroke="#a3a3a3" strokeWidth="2.6" /><rect x="3" y="11.5" width="18" height="12.5" rx="1.5" fill="#606060" /></g>,
  crs: <g stroke="#6b6b6b" fill="none" strokeWidth="1.1"><circle cx="12" cy="12" r="10.5" fill="#d2d2d2" /><ellipse cx="12" cy="12" rx="4.5" ry="10.5" /><path d="M12 1.500v21M1.500 12h21M3.500 6.500h17M3.500 17.500h17M5.500 1l-4 4M18.500 1l4 4" /></g>,
  bubble: <path d="M12 1c6.600 0 11 4.300 11 9.800 0 4.700-3 8.200-7.500 9.500.5 1.500 1.500 2.700 3.500 3.700-4 .3-7-1-8.500-3C4.500 20.300 1 16 1 10.800 1 5.300 5.400 1 12 1z" fill="#666" />,
};

const Icon = ({ name, size = 54 }: { name: string; size?: number }) => (
  <svg width={size} height={size} viewBox="0 0 24 24">{icons[name]}</svg>
);
const SearchGlyph = ({ size = 34 }: { size?: number }) => (
  <svg width={size} height={size} viewBox="0 0 24 24">
    <circle cx="10" cy="9.5" r="8" fill="none" stroke="#9a9a9a" strokeWidth="2.2" />
    <path d="M15.5 15.500L23 23" stroke="#9a9a9a" strokeWidth="3" />
  </svg>
);

/* --------------------------------------------------------------- primitives */

const Window = styled.div`
  position: relative;
  zoom: 0.930275;
  width: 4403px;
  height: 2335px;
  overflow: hidden;
  display: flex;
  flex-direction: column;
  background: #f0f0f0;
  color: #111;
  font-family: ${UI};
  font-size: 34px;
  letter-spacing: -0.85px;
  line-height: 1;
  white-space: nowrap;
`;
const Caret = styled.span<{ $dir?: "down" | "up" | "right"; $dim?: boolean; $s?: number }>`
  flex: none;
  width: 0;
  height: 0;
  border: solid transparent;
  ${({ $dir = "down", $dim, $s = 11 }) => {
    const c = $dim ? "#a5a5a5" : "#555";
    if ($dir === "right") return css`border-width: ${$s}px 0 ${$s}px ${$s * 1.1}px; border-left-color: ${c};`;
    if ($dir === "up") return css`border-width: 0 ${$s}px ${$s * 1.15}px; border-bottom-color: ${c};`;
    return css`border-width: ${$s * 1.15}px ${$s}px 0; border-top-color: ${c};`;
  }}
`;
const LayerMenuCaret = styled(Caret)`
  margin: 0 -1px 0 -7px;
`;
const Underlined = styled.span`
  border-bottom: 3px solid currentColor;
  display: inline-block;
  line-height: 1.02;
`;
const Label = ({ text }: { text: string }) => {
  const i = text.indexOf("&");
  if (i < 0) return <span>{text}</span>;
  return (
    <span>
      {text.slice(0, i)}
      <Underlined>{text[i + 1]}</Underlined>
      {text.slice(i + 2)}
    </span>
  );
};

const TitleBar = styled.header`
  flex: none;
  height: 66px;
  display: flex;
  align-items: center;
  padding-left: 8px;
  gap: 16px;
  font-size: 34.5px;
  letter-spacing: -0.95px;
  background: linear-gradient(90deg, #f2f0f8 0%, #f4f0f8 60%, #fbeef7 80%, #f7f1f8 88%, #f6f1f8 100%);
`;
const WindowButtons = styled.div`
  margin-left: auto;
  display: flex;
  gap: 107px;
  padding-right: 59px;
`;
const MenuBar = styled.nav`
  flex: none;
  height: 58px;
  display: flex;
  align-items: center;
  background: #efefef;
  border-bottom: 3px solid #d4d4d4;
`;
const MenuTitle = styled.span<{ $at: number }>`
  width: ${({ $at }) => $at}px;
  padding-top: 4px;
  flex: none;
`;
const ToolBar = styled.div<{ $h?: number }>`
  flex: none;
  height: ${({ $h = 89.5 }) => $h}px;
  display: flex;
  align-items: center;
  background: linear-gradient(#fbfbfb, #eeeeee);
  border-bottom: 3px solid #b9b9b9;
  overflow: hidden;
`;
const ToolButton = styled.div<{ $on?: boolean }>`
  flex: none;
  width: 71.7px;
  height: 71px;
  margin: 0 2px;
  display: flex;
  align-items: center;
  justify-content: center;
  border-radius: 6px;
  ${({ $on }) => $on && css`background: #dedede; border: 3px solid #b0b0b0;`}
`;
const MenuArrow = styled.div`
  flex: none;
  width: 34.5px;
  display: flex;
  justify-content: center;
  padding: 4px 4px 0 0;
`;
const Grip = styled.div<{ $w?: number }>`
  flex: none;
  width: ${({ $w = 40.5 }) => $w}px;
  height: 40px;
  background: radial-gradient(circle, #b8b8b8 1.4px, transparent 2px) center / 7px 7.5px;
  background-clip: content-box;
  padding: 0 ${({ $w = 40.5 }) => ($w - 13) / 2}px;
`;
const VSep = styled.div`
  flex: none;
  width: 2px;
  height: 60px;
  margin: 0 9px;
  background: #d0d0d0;
`;
const Spacer = styled.div<{ $w: number }>`
  flex: none;
  width: ${({ $w }) => $w}px;
`;
const DarkChip = styled.div<{ $w: number; $ml?: number }>`
  flex: none;
  width: ${({ $w }) => $w}px;
  margin-left: ${({ $ml = 0 }) => $ml}px;
  height: 50px;
  display: flex;
  align-items: center;
  gap: 18px;
  padding-left: 6px;
  color: #fff;
  background: #5f5f5f;
  font: 28px ${TAHOMA};
`;
const Knob = styled.i`
  width: 32px;
  height: 32px;
  border-radius: 50%;
  border: 9px solid #4a4a4a;
  background: #a5a5a5;
`;
const Combo = styled.div<{ $w: number; $h: number }>`
  flex: none;
  width: ${({ $w }) => $w}px;
  height: ${({ $h }) => $h}px;
  display: flex;
  align-items: center;
  justify-content: space-between;
  padding-left: 9px;
  border: 2.5px solid #b4b4b4;
  border-radius: 7px;
  background: #fff;
  font-family: ${TAHOMA};
`;
const ComboBtn = styled.div<{ $w: number }>`
  width: ${({ $w }) => $w}px;
  height: 100%;
  display: flex;
  align-items: center;
  justify-content: center;
  background: linear-gradient(#fdfdfd, #ececec);
`;

const Body = styled.main`
  flex: 1;
  min-height: 0;
  display: flex;
`;
const DockColumn = styled.section<{ $w: number }>`
  flex: none;
  width: ${({ $w }) => $w}px;
  display: flex;
  flex-direction: column;
`;
const DockTitle = styled.div`
  flex: none;
  height: 54px;
  display: flex;
  align-items: center;
  justify-content: space-between;
  padding: 0 4px 2px 12px;
`;
const DockButtons = styled.div`
  display: flex;
  gap: 7px;
  padding-bottom: 5px;
`;
const DockBtns = () => (
  <DockButtons>
    <svg width="25" height="26" viewBox="0 0 25 26" fill="none" stroke="#6c6c6c" strokeWidth="2.2">
      <rect x="1.2" y="1.2" width="22.6" height="23.6" rx="5" /><rect x="6" y="11" width="9" height="9" rx="2" /><path d="M10.5 10V6.500h8.500v9h-3" />
    </svg>
    <svg width="25" height="26" viewBox="0 0 25 26" fill="none" stroke="#6c6c6c" strokeWidth="2.2">
      <rect x="1.2" y="1.2" width="22.6" height="23.6" rx="5" /><path d="M7 7l11 12M18 7L7 19" strokeWidth="4.5" stroke="#555" />
    </svg>
  </DockButtons>
);
const DockTools = styled.div`
  flex: none;
  height: 63px;
  display: flex;
  align-items: center;
  padding: 0 0 9px 22px;
  gap: 22.5px;
`;
const Frame = styled.div<{ $h: number }>`
  flex: none;
  height: ${({ $h }) => $h}px;
  margin: 0 1px 0 3px;
  display: flex;
  background: #fff;
  border: 2.5px solid #b9b9b9;
  overflow: hidden;
`;
const SplitHandle = styled.div`
  flex: none;
  height: 17px;
  padding: 5px 0;
  width: 38px;
  margin: 0 auto;
  background: radial-gradient(circle, #bdbdbd 1.5px, transparent 2px) 0 50% / 7px 7px;
  background-clip: content-box;
`;
const SplitColumn = styled.div<{ $w: number }>`
  flex: none;
  width: ${({ $w }) => $w}px;
  padding: 922px 6px 915px 4px;
  background: radial-gradient(circle, #bdbdbd 1.5px, transparent 2px) center / 7px 7px content-box;
`;
const ScrollTrack = styled.div<{ $w: number }>`
  flex: none;
  width: ${({ $w }) => $w}px;
  display: flex;
  flex-direction: column;
  background: #e4e4e4;
  border-left: 2px solid #c4c4c4;
`;
const ScrollArrow = styled.div<{ $h: number }>`
  flex: none;
  height: ${({ $h }) => $h}px;
  display: flex;
  align-items: center;
  justify-content: center;
  background: linear-gradient(90deg, #fff, #f0f0f0);
`;
const ScrollThumb = styled.div<{ $h: number }>`
  flex: none;
  height: ${({ $h }) => $h}px;
  background: linear-gradient(90deg, #fff, #f0f0f0);
  border: solid #bfbfbf;
  border-width: 2px 0;
`;
const Grow = styled.div`
  flex: 1;
  min-width: 0;
`;
const TreeBody = styled.div`
  flex: 1;
  min-width: 0;
`;
const TreeRow = styled.div<{ $indent?: number }>`
  height: 50.4px;
  display: flex;
  align-items: center;
  padding-left: ${({ $indent = 0 }) => $indent}px;
`;
const TwistySlot = styled.span`
  width: 46px;
  padding-left: 13px;
  display: flex;
`;
const IconSlot = styled.span<{ $w: number }>`
  flex: none;
  width: ${({ $w }) => $w}px;
  display: flex;
  align-items: center;
`;
const LayerRow = styled.div<{ $state?: "off" | "selected" }>`
  height: 50.5px;
  display: flex;
  align-items: center;
  padding-left: 65px;
  font-weight: 700;
  letter-spacing: -0.4px;
  ${({ $state }) => $state === "off" && css`
    color: #868686;
    font-style: italic;
    font-size: 35.5px;
    letter-spacing: 0.1px;
  `}
  ${({ $state }) => $state === "selected" && css`
    background: linear-gradient(90deg, #0078d7 172px, #1783de 172px);
    color: #fff;
    padding-left: 22px;
    text-decoration: underline;
    text-decoration-thickness: 2.5px;
    text-underline-offset: 4px;
  `}
`;
const Check = styled.span<{ $w?: number; $h?: number }>`
  flex: none;
  width: ${({ $w = 38 }) => $w}px;
  height: ${({ $h = 38 }) => $h}px;
  display: flex;
  align-items: center;
  justify-content: center;
  background: #fff;
  border: 2.5px solid #c2c2c2;
`;
const Tick = () => (
  <svg width="28" height="28" viewBox="0 0 26 26"><path d="M2.5 13l4-1.500c2 2.500 3 4.500 3.800 6.500C13 12 17.500 6 23 1.500l.8 1C18.500 8 14 16 11 24.500H9C7.500 20.500 5.500 16 2.500 13z" fill="#111" /></svg>
);
const Swatch = styled.span<{ $c: string; $w: number; $h: number; $hollow?: boolean }>`
  flex: none;
  width: ${({ $w }) => $w}px;
  height: ${({ $h }) => $h}px;
  background: ${({ $c, $hollow }) => ($hollow ? "#fff" : $c)};
  border: ${({ $c, $hollow }) => ($hollow ? `6px solid ${$c}` : "2.5px solid #3a4a30")};
`;
const Canvas = styled.section`
  flex: none;
  width: 2638px;
  margin-top: 1px;
  background: #fff;
  border: 2.5px solid #b9b9b9;
`;
const EditorMenuBtn = styled.div`
  align-self: flex-end;
  width: 63px;
  height: 62px;
  margin: -10px 1px 0 0;
  display: flex;
  align-items: center;
  justify-content: center;
  border: 2.5px solid #b4b4b4;
  border-radius: 6px;
  background: linear-gradient(#fdfdfd, #ececec);
`;
const Hint = styled.p`
  margin: 0;
  padding-left: 28px;
  font: 29px/36.5px ${TAHOMA};
  letter-spacing: 0.02px;
`;
const HintBlock = styled.div`
  display: flex;
  flex-direction: column;
  gap: 36.5px;
  padding-top: 83px;
`;
const RightTitle = styled(DockTitle)`
  justify-content: flex-end;
`;
const ToolboxTools = styled.div`
  flex: none;
  height: 63px;
  padding: 4px 0 0 378px;
  display: flex;
  align-items: center;
  gap: 17px;
`;
const ThinSep = styled.i`
  width: 2px;
  height: 34px;
  background: #dcdcdc;
`;
const LineEdit = styled.div<{ $w?: number; $h: number }>`
  flex: none;
  ${({ $w }) => $w && css`width: ${$w}px;`}
  height: ${({ $h }) => $h}px;
  display: flex;
  align-items: center;
  gap: 23px;
  background: #fff;
  border: 2.5px solid #b4b4b4;
  border-radius: 7px;
`;
const ToolboxTree = styled.div`
  flex: none;
  width: 608px;
  height: 1628px;
  padding: 415px 0 0 361px;
  border: 2.5px solid #b9b9b9;
  background: #fff;
  display: flex;
  flex-direction: column;
`;
const TreeText = styled.span<{ $h: number; $blue?: boolean }>`
  display: block;
  flex: none;
  height: ${({ $h }) => $h}px;
  ${({ $blue }) => $blue && css`
    color: #2a7ab8;
    margin-left: -13px;
  `}
`;
const Tabs = styled.div`
  display: flex;
  align-items: flex-start;
  padding-top: 4px;
`;
const Tab = styled.div<{ $w: number; $on?: boolean }>`
  width: ${({ $w }) => $w}px;
  height: ${({ $on }) => ($on ? 66 : 60)}px;
  display: flex;
  align-items: center;
  justify-content: center;
  font: 29px ${TAHOMA};
  letter-spacing: 0.2px;
  background: ${({ $on }) => ($on ? "linear-gradient(#f4f4f4, #fbfbfb)" : "#dcdcdc")};
  border: 2.5px solid #b9b9b9;
  border-top-width: ${({ $on }) => ($on ? 0 : 2.5)}px;
  border-radius: 0 0 6px 6px;
`;
const StatusBar = styled.footer`
  flex: none;
  height: 71px;
  display: flex;
  align-items: center;
  padding: 3px 0 0 13px;
  font: 28.5px ${TAHOMA};
  letter-spacing: -0.25px;
`;
const Placeholder = styled.span`
  font-style: italic;
  font-size: 29px;
  letter-spacing: 0.5px;
  color: #8a8a8a;
`;
const StatusLabel = styled.span<{ $w: number; $ml?: number }>`
  flex: none;
  width: ${({ $w }) => $w}px;
  margin-left: ${({ $ml = 0 }) => $ml}px;
  padding-top: 3px;
`;
const SpinBtns = styled.div`
  width: 38px;
  height: 100%;
  display: flex;
  flex-direction: column;
  align-items: center;
  justify-content: space-evenly;
  border-left: 2px solid #c4c4c4;
  background: linear-gradient(#fdfdfd, #f0f0f0);
`;

/* -------------------------------------------------------------- context menu */

const Popup = styled.div`
  position: absolute;
  left: 1123px;
  top: -8px;
  width: 633px;
  height: 1304px;
  background: #fff;
`;
const PopupRow = styled.div<{ $hot?: boolean; $off?: boolean }>`
  height: 63.7px;
  display: flex;
  align-items: center;
  padding: 8px 12px 0 7px;
  letter-spacing: -0.78px;
  color: ${({ $hot, $off }) => ($hot ? "#fff" : $off ? "#7d7d7d" : "#111")};
  background: ${({ $hot }) => ($hot ? "#0078d7" : "transparent")};
`;
const PopupIcon = styled.span`
  width: 59px;
  display: flex;
  margin-top: -7px;
`;
const PopupSep = styled.hr`
  height: 2.5px;
  margin: 0 11px 1.8px 4px;
  border: 0;
  background: #bdbdbd;
`;

type Item = { t?: string; icon?: string; off?: boolean; sub?: boolean; hot?: boolean };
const popupItems: Item[] = [
  { t: "&Zoom to Layer(s)", icon: "zoomlayer" }, { t: "Zoom to &Selection", icon: "zoomsel", off: true },
  { t: "Show in &Overview", icon: "glasses" }, { t: "Show Feature &Count", icon: "checkbox" },
  { t: "Show &Labels", icon: "labels" }, { t: "Copy Layer" }, { t: "Re&name Layer" }, {},
  { t: "&Duplicate Layer", icon: "dup" }, { t: "&Remove Layer…", icon: "rem" }, {},
  { t: "Move to &Top" }, {},
  { t: "Open &Attribute Table", icon: "atable" }, { t: "Toggle &Editing", icon: "pencil" }, { t: "&Filter…" }, { t: "C&hange Data Source…" }, {},
  { t: "Set Layer Scale &Visibility…" }, { t: "Layer CRS", sub: true }, {},
  { t: "E&xport", sub: true }, {},
  { t: "Styles", sub: true }, { t: "Add Layer Notes…" }, { t: "&Properties…", hot: true },
];

/* -------------------------------------------------------------------- dialog */

const Dialog = styled.div`
  position: absolute;
  left: 1778px;
  top: 248px;
  width: 2376px;
  height: 1813px;
  display: flex;
  flex-direction: column;
  overflow: hidden;
  background: #f0f0f0;
`;
const DialogTitle = styled.div`
  flex: none;
  height: 77px;
  display: flex;
  align-items: center;
  padding: 0 22px 6px 16px;
  gap: 12px;
  color: #8f8f8f;
  background: #f3f3f3;
  letter-spacing: -0.74px;
`;
const DialogMain = styled.div`
  flex: 1;
  min-height: 0;
  display: flex;
`;
const Side = styled.div`
  flex: none;
  width: 378px;
  display: flex;
  flex-direction: column;
  background: #5c5c5c;
`;
const SideSearch = styled.div`
  flex: none;
  width: 376px;
  height: 58px;
  display: flex;
  align-items: center;
  padding-left: 19px;
  background: #fff;
  border-top: 3px solid #a8a8a8;
  border-radius: 0 0 6px 0;
`;
const SideMain = styled.div`
  flex: 1;
  min-height: 0;
  display: flex;
  margin-top: 17px;
`;
const SideList = styled.div`
  flex: 1;
`;
const SideRow = styled.div<{ $on?: boolean; $h?: number }>`
  height: ${({ $h = 86.7 }) => $h}px;
  display: flex;
  align-items: center;
  padding-left: ${({ $on }) => ($on ? 13 : 6)}px;
  gap: 19px;
  line-height: 45px;
  font-size: 33.5px;
  letter-spacing: -0.7px;
  color: ${({ $on }) => ($on ? "#111" : "#fff")};
  background: ${({ $on }) => ($on ? "#f0f0f0" : "transparent")};
`;
const SideText = styled.span`
  white-space: pre;
  padding-top: 4px;
`;
const Content = styled.div`
  flex: none;
  width: 1998px;
  padding: 7px 0 0 12px;
  display: flex;
  flex-direction: column;
  font-family: ${TAHOMA};
  font-size: 29px;
  letter-spacing: 0.15px;
`;
const FormRow = styled.div<{ $h: number; $mt: number }>`
  flex: none;
  height: ${({ $h }) => $h}px;
  margin-top: ${({ $mt }) => $mt}px;
  display: flex;
  align-items: center;
`;
const ActionRow = styled(FormRow)`
  font-size: 28.5px;
  letter-spacing: -0.35px;
`;
const FormLabel = styled.span`
  flex: none;
  width: 162px;
  padding-top: 3px;
`;
const Button = styled.div<{ $w: number; $h: number; $ml?: number; $left?: boolean }>`
  flex: none;
  width: ${({ $w }) => $w}px;
  height: ${({ $h }) => $h}px;
  margin-left: ${({ $ml = 0 }) => $ml}px;
  display: flex;
  align-items: center;
  justify-content: ${({ $left }) => ($left ? "space-between" : "center")};
  padding: 3px ${({ $left }) => ($left ? 11 : 0)}px 0;
  border: 2.5px solid #b4b4b4;
  border-radius: 7px;
  background: linear-gradient(#fefefe, #ebebeb);
`;
const PinkFill = styled.div`
  width: 100%;
  height: 61px;
  margin: -3px 9px 0;
  background: #e15989;
  border: 2.5px solid #7d3a55;
`;
const SmallAbc = styled.b`
  color: #555;
  font: 700 23px ${UI};
  margin-right: 12px;
`;
const Pair = styled.span`
  display: flex;
  align-items: center;
`;
const Eps = styled.span`
  color: #5b2d63;
  font: 400 56px/40px ${UI};
  padding-bottom: 18px;
  margin-left: -6px;
`;
const Table = styled.div`
  flex: none;
  height: 1186px;
  margin-top: 17px;
  background: #fff;
  border: 2.5px solid #b9b9b9;
  font-family: ${UI};
  font-size: 33.5px;
  letter-spacing: -0.65px;
`;
const Grid = styled.div<{ $head?: boolean; $gray?: boolean }>`
  display: grid;
  grid-template-columns: 185px 267px 1fr;
  align-items: center;
  height: ${({ $head }) => ($head ? 55 : 45.5)}px;
  ${({ $head }) => $head && css`
    background: linear-gradient(#fcfcfc, #ececec);
    border-bottom: 3px solid #b9b9b9;
    margin-bottom: 1px;
  `}
  ${({ $gray }) => $gray && css`
    color: #8c8c8c;
    font-style: italic;
    letter-spacing: 0;
  `}
`;
const HeadCell = styled.div`
  height: 100%;
  display: flex;
  align-items: center;
  justify-content: space-between;
  padding: 6px 11px 0 6px;
  border-right: 2px solid #c6c6c6;
`;
const Cell = styled.div<{ $pl?: number }>`
  display: flex;
  align-items: center;
  gap: 14px;
  padding-left: ${({ $pl = 8 }) => $pl}px;
`;
const BoldLabel = styled.b`
  margin-left: 26px;
  padding-top: 3px;
  letter-spacing: 0;
`;

/* --------------------------------------------------------------- annotations */

const RedBox = styled.div<{ $x: number; $y: number; $w: number; $h: number }>`
  position: absolute;
  left: ${({ $x }) => $x}px;
  top: ${({ $y }) => $y}px;
  width: ${({ $w }) => $w}px;
  height: ${({ $h }) => $h}px;
  border: 7px solid #f00;
`;
const Badge = styled.div<{ $x: number; $y: number }>`
  position: absolute;
  left: ${({ $x }) => $x - 55.5}px;
  top: ${({ $y }) => $y - 55.5}px;
  width: 111px;
  height: 111px;
  display: flex;
  align-items: center;
  justify-content: center;
  border-radius: 50%;
  background: #f00;
  color: #fff;
  font: 74px/1 "Liberation Sans", Arial, sans-serif;
  letter-spacing: 0;
`;

/* ---------------------------------------------------------------------- data */

const T = ({ n, on, menu }: { n: string; on?: boolean; menu?: boolean | "dim" }) => (
  <>
    <ToolButton $on={on}><Icon name={n} /></ToolButton>
    {menu && <MenuArrow><Caret $dim={menu === "dim"} $s={11} /></MenuArrow>}
  </>
);

const menus: [string, number][] = [
  ["Pro&ject", 140], ["&Edit", 92], ["&View", 108], ["&Layer", 115], ["&Settings", 156], ["&Plugins", 142],
  ["Vect&or", 131], ["&Raster", 129], ["&Datab", 713], ["essing", 130], ["&Help", 108], ["Vett&ore", 160],
];

const browserRows: [string, string, string][] = [
  ["", "fav", "Favorites"], ["r", "bookmark", "Spatial Bookmarks"], ["r", "projhome", "Project Home"], ["r", "home", "Home"],
  ["r", "folder", "C:\\ (Windows)"], ["r", "folder", "D:\\ (Data)"], ["r", "folder", "E:\\ (Endi)"], ["d", "gpkg", "GeoPackage"],
];

const sideRows = [
  ["info", "Information"], ["source", "Source"], ["symbology", "Symbology"], ["labels", "Labels"], ["masks", "Masks"], ["cube", "3D View"],
  ["diagrams", "Diagrams"], ["fields", "Fields"], ["form", "Attributes Form"], ["joins", "Joins"], ["aux", "Auxiliary\nStorage"],
  ["actions", "Actions"], ["display", "Display"], ["brush", "Rendering"], ["clock", "Temporal"], ["eps", "Variables"],
  ["elevation", "Elevation"], ["metadata", "Metadata"], ["deps", "Dependencies"],
];

const classes = [
  ["#77dc28", "BH080-Lake"], ["#f92828", "BH130-Reservoir"], ["#1f78b4", "BH140-River"], ["#cacaca", "all other values"],
];

const MapDrawing = () => (
  <svg width="2633" height="1868" viewBox="1138.5 393.5 2633 1868">
    <path d="M1720 443h80M1740 760l30 145 60 70" fill="none" stroke="#e31a1c" strokeWidth="11" />
    <path d="M1745 704q20 2 40 14" fill="none" stroke="#222" strokeWidth="7" />
    <path d="M1745 704q20 2 40 14" fill="none" stroke="#1f78b4" strokeWidth="4" />
    <path d="M1745 732q18 12 36 20M1786 722q-18 12-5 26" fill="none" stroke="#c9e04a" strokeWidth="3.5" />
    <path d="M2600 1985L2797 2218 3233 2134 3190 2010" fill="none" stroke="#e31a1c" strokeWidth="10" strokeLinejoin="round" />
    <path
      d="M2846 2050L2852 2061 2858 2077 2878 2093 2902 2109 2917 2118 2940 2133 2962 2147 2977 2163 2983 2173 2990 2181 3008 2179 3012 2173 3005 2160 2992 2150 2993 2132 2981 2125 2967 2117 2946 2108 2927 2106 2908 2093 2892 2080 2893 2050z"
      fill="#1f78b4" stroke="#222" strokeWidth="2.5"
    />
    <path d="M2884 2138l8 6 16 18-4 4-16-12z" fill="#7fb069" stroke="#222" strokeWidth="2" />
    <g fill="none" stroke="#111" strokeWidth="5" strokeDasharray="7 3 3 4">
      <path d="M2764 2062l6 3M2788 2064l8 10M2806 2064l3 3M2822 2080l3 6M2829 2096l2 5" />
      <path d="M2874 2110l30 8M2862 2126l22-8M2886 2120l28 8M2908 2112l6 12M2878 2138l8 20M2912 2140l-8 18" />
      <path d="M2882 2156l6 22 12 10M2890 2160l16 22-8 6M2900 2150l8 24M2930 2158l-4 8M2922 2180l20 8-8 6M2896 2194l16 4" />
      <path d="M2984 2116l5 6M3128 2122l3 4M3148 2062l6 2" />
    </g>
  </svg>
);

export default function App() {
  return (
    <>
      <Global />
      <Window>
        <TitleBar>
          <Icon name="qgis" size={44} />
          <span>*Corso_Cop4Schools_2024 — QGIS</span>
          <WindowButtons>
            <svg width="28" height="28" viewBox="0 0 28 28"><path d="M0 13h28" stroke="#111" strokeWidth="3" /></svg>
            <svg width="28" height="28" viewBox="0 0 28 28" fill="none" stroke="#111" strokeWidth="2.8"><rect x="1.5" y="6.5" width="20" height="20" rx="4" /><path d="M7 2h14q5.500 0 5.500 5.500V21" /></svg>
            <svg width="28" height="28" viewBox="0 0 28 28"><path d="M0 0l28 28M28 0L0 28" stroke="#111" strokeWidth="2.8" /></svg>
          </WindowButtons>
        </TitleBar>

        <MenuBar>
          <Spacer $w={29} />
          {menus.map(([t, w]) => <MenuTitle key={t} $at={w}><Label text={t} /></MenuTitle>)}
        </MenuBar>

        <ToolBar>
          <Grip $w={36} />
          <T n="newdoc" /><T n="open" /><T n="save" /><T n="layout" /><T n="layoutmgr" /><T n="style" />
          <Grip />
          <T n="hand" on /><T n="pansel" /><T n="zoomin" /><T n="zoomout" /><T n="zoomfull" /><T n="zoomsel" /><T n="zoomlayer" /><T n="zoomnative" />
          <Spacer $w={606} />
          <Grip />
          <T n="selrect" menu /><T n="selform" menu /><T n="desel" menu /><T n="selloc" />
          <Grip />
          <T n="identify" /><T n="abacus" /><T n="gear" on /><T n="sigma" /><T n="table" menu /><T n="ruler" menu /><T n="tip" /><T n="actiondim" menu="dim" />
        </ToolBar>

        <ToolBar>
          <Grip $w={36} />
          <T n="dsm" /><T n="newgpkg" /><T n="newshp" /><T n="feather" /><T n="memory" /><T n="mesh" /><T n="virtual" />
          <Grip />
          <T n="pencilsdim" /><T n="pencil" /><T n="savedim" /><T n="segdim" menu="dim" /><T n="polydim" /><T n="vertdim" menu="dim" />
          <Spacer $w={564} />
          <T n="labels" /><T n="pie" /><VSep /><T n="lblue" /><T n="lred" /><VSep />
          <T n="lgray" /><T n="lgray" /><T n="lgray" /><T n="lgray" /><T n="lgray" />
          <Grip $w={43} /><T n="dbblue" /><Grip $w={43} />
          <T n="globe1" /><T n="globe1" /><T n="globe2" />
          <Grip $w={43} /><T n="python" /><T n="cyan" /><Spacer $w={120} /><T n="plug" />
        </ToolBar>

        <ToolBar $h={87}>
          <Grip $w={36} />
          <T n="scp" />
          <Grip />
          <T n="roiband" /><T n="bandlens" />
          <DarkChip $w={157} $ml={2}><Knob />RGB =</DarkChip>
          <Spacer $w={4} />
          <Combo $w={182} $h={54}>-<ComboBtn $w={58}><Caret $s={11} /></ComboBtn></Combo>
          <T n="pct" /><T n="sig" /><T n="scpzoom" />
          <DarkChip $w={161}><Knob />ROI</DarkChip>
          <T n="roipoly" />
          <Spacer $w={500} />
          <Combo $w={152} $h={54} />
          <Spacer $w={3} />
          <DarkChip $w={120} />
        </ToolBar>

        <Body>
          <DockColumn $w={1120}>
            <DockTitle>Browser<DockBtns /></DockTitle>
            <DockTools>
              {["addlayer", "refresh", "funnel", "treeup", "info"].map((n) => <Icon key={n} name={n} size={35} />)}
            </DockTools>
            <Frame $h={431}>
              <TreeBody>
                {browserRows.map(([tw, ic, t]) => (
                  <TreeRow key={t}>
                    <TwistySlot>{tw === "r" ? <Caret $dir="right" $s={10.5} /> : tw === "d" ? <Caret $s={10} /> : null}</TwistySlot>
                    <IconSlot $w={60}><Icon name={ic} size={45} /></IconSlot>{t}
                  </TreeRow>
                ))}
                <TreeRow $indent={39}>
                  <TwistySlot><Caret $dir="right" $s={10.5} /></TwistySlot>
                  <IconSlot $w={61}><Icon name="db" size={42} /></IconSlot>GIS4Schools_GeoPackage.gpkg
                </TreeRow>
              </TreeBody>
              <ScrollTrack $w={38}>
                <ScrollArrow $h={37}><Caret $dir="up" $s={11} /></ScrollArrow>
                <ScrollThumb $h={138} />
                <Grow />
                <ScrollArrow $h={37}><Caret $s={11} /></ScrollArrow>
              </ScrollTrack>
            </Frame>
            <SplitHandle />
            <DockTitle>Layers<DockBtns /></DockTitle>
            <DockTools>
              {["brush3", "groupadd", "eye", "funnelmenu", "epsfilter"].map((n) => <Icon key={n} name={n} size={35} />)}
              <LayerMenuCaret $s={10.5} />
              {["treedown", "treeup", "remlayer"].map((n) => <Icon key={n} name={n} size={35} />)}
            </DockTools>
            <Frame $h={782}>
              <TreeBody>
                <LayerRow><Check><Tick /></Check><Spacer $w={14} /><IconSlot $w={59}><Icon name="lineicon" size={43} /></IconSlot>EMSR468_AOI05_DEL_PRODUCT_transportationL_r1_v1</LayerRow>
                <LayerRow><Check><Tick /></Check><Spacer $w={14} /><IconSlot $w={59}><Swatch $c="#85b66f" $w={43} $h={43} /></IconSlot>EMSR468_AOI05_DEL_PRODUCT_observedEventA_r1_v1</LayerRow>
                <LayerRow $state="off"><Check /><Spacer $w={14} /><IconSlot $w={59}><Swatch $c="#e5c24b" $w={43} $h={43} /></IconSlot>EMSR468_AOI05_DEL_PRODUCT_imageFootprintA_r1_v1</LayerRow>
                <LayerRow><Check><Tick /></Check><Spacer $w={14} /><IconSlot $w={61}><Icon name="vline" size={45} /></IconSlot>EMSR468_AOI05_DEL_PRODUCT_hydrographyL_r1_v1</LayerRow>
                <LayerRow $state="selected"><IconSlot $w={43}><Caret $dir="right" $s={10.5} /></IconSlot><Check><Tick /></Check><Spacer $w={14} /><IconSlot $w={61}><Icon name="poly" size={43} /></IconSlot>EMSR468_AOI05_DEL_PRODUCT_hydrographyA_r1_v1</LayerRow>
                <LayerRow><Check><Tick /></Check><Spacer $w={14} /><IconSlot $w={59}><Swatch $c="#e31a1c" $w={43} $h={43} $hollow /></IconSlot>EMSR468_AOI05_DEL_PRODUCT_areaOfInterestA_r1_v1</LayerRow>
              </TreeBody>
            </Frame>
            <SplitHandle />
            <DockTitle>Vertex Editor<DockBtns /></DockTitle>
            <EditorMenuBtn>
              <svg width="31" height="31" viewBox="0 0 31 31"><path d="M0 4h31M0 15.500h31M0 27h31" stroke="#4d4d4d" strokeWidth="5" /></svg>
            </EditorMenuBtn>
            <HintBlock>
              <Hint>Right click on an editable feature to show its table of vertices.</Hint>
              <Hint>
                When a feature is bound to this panel, dragging a rectangle to select vertices on<br />
                the canvas will only select those of the bound feature.
              </Hint>
            </HintBlock>
          </DockColumn>

          <SplitColumn $w={16} />
          <Canvas><MapDrawing /></Canvas>
          <Spacer $w={18} />

          <DockColumn $w={611}>
            <RightTitle><DockBtns /></RightTitle>
            <ToolboxTools><ThinSep /><Icon name="wrench" size={37} /></ToolboxTools>
            <LineEdit $h={58} />
            <ToolboxTree>
              <TreeText $h={202}>is</TreeText>
              <TreeText $h={253}>nalysis</TreeText>
              <TreeText $h={101}>y</TreeText>
              <TreeText $h={50} $blue>a</TreeText>
            </ToolboxTree>
            <Tabs><Tab $w={263}>Results Viewer</Tab><Tab $w={320} $on>Processing Toolbox</Tab></Tabs>
          </DockColumn>
        </Body>

        <StatusBar>
          <LineEdit $w={530} $h={58}><Spacer $w={0} /><SearchGlyph /><Placeholder>Type to locate (Ctrl+K)</Placeholder></LineEdit>
          <StatusLabel $ml={1782} $w={149}>Coordinate</StatusLabel>
          <Combo $w={262} $h={58}>45,0816° 8,2602°</Combo>
          <Spacer $w={14} /><Icon name="satellite" size={42} />
          <StatusLabel $ml={31} $w={79}>Scale</StatusLabel>
          <Combo $w={211} $h={54}>1:116653<ComboBtn $w={53}><Caret $s={10} /></ComboBtn></Combo>
          <Spacer $w={26} /><Icon name="lock" size={44} />
          <StatusLabel $ml={19} $w={126}>Magnifier</StatusLabel>
          <Combo $w={210} $h={54}>100%<SpinBtns><Caret $dir="up" $s={9} /><Caret $s={9} /></SpinBtns></Combo>
          <StatusLabel $ml={24} $w={129}>Rotation</StatusLabel>
          <Combo $w={200} $h={54}>0,0 °<SpinBtns><Caret $dir="up" $s={9} /><Caret $s={9} /></SpinBtns></Combo>
          <Spacer $w={16} /><Check><Tick /></Check>
          <StatusLabel $ml={16} $w={126}>Render</StatusLabel>
          <Icon name="crs" size={46} />
          <StatusLabel $ml={6} $w={197}>EPSG:4326</StatusLabel>
          <Icon name="bubble" size={50} />
        </StatusBar>

        <Popup>
          {popupItems.map((it, i) =>
            it.t ? (
              <PopupRow key={i} $hot={it.hot} $off={it.off}>
                <PopupIcon>{it.icon && <Icon name={it.icon} size={44} />}</PopupIcon>
                <Label text={it.t} />
                <Grow />
                {it.sub && <Caret $dir="right" $s={10} />}
              </PopupRow>
            ) : (
              <PopupSep key={i} />
            )
          )}
        </Popup>

        <Dialog>
          <DialogTitle>
            <Icon name="qgis" size={45} />
            Layer Properties — EMSR468_AOI05_DEL_PRODUCT_hydrographyA_r1_v1 — Symbology
            <Grow />
            <svg width="28" height="28" viewBox="0 0 28 28"><path d="M0 0l28 28M28 0L0 28" stroke="#8f8f8f" strokeWidth="2.5" /></svg>
          </DialogTitle>
          <DialogMain>
            <Side>
              <SideSearch><SearchGlyph /></SideSearch>
              <SideMain>
                <SideList>
                  {sideRows.map(([ic, t]) => (
                    <SideRow key={t} $on={t === "Symbology"} $h={ic === "aux" ? 108.5 : undefined}>
                      <Icon name={ic} size={60} /><SideText>{t}</SideText>
                    </SideRow>
                  ))}
                </SideList>
                <ScrollTrack $w={38}>
                  <ScrollArrow $h={38}><Caret $dir="up" $s={11} /></ScrollArrow>
                  <ScrollThumb $h={1299} />
                  <Grow />
                  <ScrollArrow $h={34}><Caret $s={11} /></ScrollArrow>
                </ScrollTrack>
              </SideMain>
            </Side>
            <Content>
              <Button $w={1990} $h={64} $left>
                <Pair><Spacer $w={5} /><Icon name="cats" size={40} /><Spacer $w={7} />Categorized</Pair>
                <Pair><Caret $s={10.5} /><Spacer $w={10} /></Pair>
              </Button>
              <FormRow $h={63} $mt={16}>
                <FormLabel>Value</FormLabel>
                <Combo $w={1748} $h={63}><Pair><SmallAbc>abc</SmallAbc>obj_type</Pair><ComboBtn $w={58}><Caret $s={10.5} /></ComboBtn></Combo>
                <Button $w={64} $h={63} $ml={18}><Eps>ε</Eps></Button>
              </FormRow>
              <FormRow $h={74} $mt={17}>
                <FormLabel>Symbol</FormLabel>
                <Button $w={1840} $h={74}><PinkFill /></Button>
              </FormRow>
              <FormRow $h={54} $mt={17}>
                <FormLabel>Color ramp</FormLabel>
                <Button $w={1794} $h={54}>Random colors</Button>
                <Button $w={40} $h={54} $ml={1}><Caret $s={10.5} /><Spacer $w={6} /></Button>
              </FormRow>
              <Table>
                <Grid $head>
                  <HeadCell>Symbol<Caret $s={10.5} /></HeadCell><HeadCell>Value</HeadCell><HeadCell>Legend</HeadCell>
                </Grid>
                {classes.map(([c, t], i) => (
                  <Grid key={t} $gray={i === 3}>
                    <Cell $pl={6}><Check $w={38} $h={37}><Tick /></Check><Swatch $c={c} $w={37} $h={36} /></Cell>
                    <Cell>{t}</Cell>
                    <Cell>{i < 3 ? t : ""}</Cell>
                  </Grid>
                ))}
              </Table>
              <ActionRow $h={62} $mt={16}>
                <Button $w={182} $h={57}>Classify</Button>
                <Button $w={75} $h={62} $ml={16}><Icon name="plus" size={44} /></Button>
                <Button $w={75} $h={62} $ml={16}><Icon name="minus" size={44} /></Button>
                <Button $w={182} $h={57} $ml={16}>Delete All</Button>
                <Button $w={188} $h={57} $ml={1246} $left>Advanced<Caret $s={10} /></Button>
              </ActionRow>
              <FormRow $h={46} $mt={15}>
                <Spacer $w={11} /><Caret $dir="right" $s={12} />
                <BoldLabel>Layer Rendering</BoldLabel>
              </FormRow>
              <ActionRow $h={58} $mt={20}>
                <Button $w={182} $h={58} $left><Pair><Spacer $w={27} />Style</Pair><Caret $s={10} /></Button>
                <Button $w={182} $h={58} $ml={1034}>OK</Button>
                <Button $w={182} $h={58} $ml={14}>Cancel</Button>
                <Button $w={182} $h={58} $ml={16}>Apply</Button>
                <Button $w={182} $h={58} $ml={16}>Help</Button>
              </ActionRow>
            </Content>
          </DialogMain>
        </Dialog>

        <RedBox $x={-1} $y={1277} $w={1121} $h={54} />
        <RedBox $x={1117} $y={1226} $w={643} $h={71} />
        <RedBox $x={1774} $y={569} $w={344} $h={96} />
        <RedBox $x={2168} $y={334} $w={1991} $h={60} />
        <RedBox $x={2322} $y={414} $w={1769} $h={72} />
        <RedBox $x={2219} $y={703} $w={55} $h={191} />
        <RedBox $x={2163} $y={1856} $w={190} $h={64} />
        <RedBox $x={3384} $y={2002} $w={183} $h={60} />
        <Badge $x={553} $y={1399}>1</Badge>
        <Badge $x={1414} $y={1380}>2</Badge>
        <Badge $x={1742} $y={505}>3</Badge>
        <Badge $x={3917} $y={271}>4</Badge>
        <Badge $x={4153} $y={522}>5</Badge>
        <Badge $x={2328} $y={1773}>6</Badge>
        <Badge $x={2310} $y={971}>7</Badge>
        <Badge $x={3440} $y={2125}>8</Badge>
      </Window>
    </>
  );
}
